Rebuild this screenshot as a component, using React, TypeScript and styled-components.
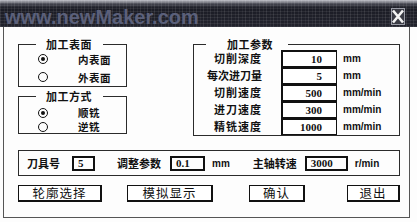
import styled, { createGlobalStyle } from 'styled-components';

const GlobalStyle = createGlobalStyle`
  html, body {
    margin: 0;
    padding: 0;
    background: #fdfdfd;
  }
  body {
    font-family: "Noto Sans CJK SC", "Liberation Sans", sans-serif;
    color: #111;
  }
`;

const Screen = styled.div`
  width: 417px;
  height: 222px;
  overflow: hidden;
  background: #fdfdfd;
`;

const TitleBar = styled.div`
  height: 27px;
  display: flex;
  align-items: center;
  justify-content: space-between;
  padding: 0 12px 0 5px;
  box-sizing: border-box;
  overflow: hidden;
  background:
    repeating-linear-gradient(90deg, rgba(255, 255, 255, 0.09) 0 1px, transparent 1px 4px, rgba(255, 255, 255, 0.05) 4px 5px, transparent 5px 7px),
    repeating-linear-gradient(0deg, rgba(255, 255, 255, 0.07) 0 1px, transparent 1px 3px),
    linear-gradient(180deg, #c4c5cc 0, #44454f 4px, #1b1c25 8px, #22232d 100%);
`;

const Watermark = styled.span`
  font-family: "Liberation Sans", sans-serif;
  font-weight: 700;
  font-size: 20px;
  line-height: 20px;
  margin-top: 6px;
  color: #5b607a;
  white-space: nowrap;
`;

const CloseBox = styled.span`
  display: flex;
  width: 14px;
  height: 17px;
  margin-top: 6px;
`;

const Body = styled.div`
  height: 191px;
  width: 407px;
  margin-left: 3px;
  box-sizing: border-box;
  border: 1px solid #555;
  border-top: none;
  padding: 11px 9px 0 14px;
`;

const TopSection = styled.div`
  display: flex;
  gap: 66px;
  align-items: flex-start;
`;

const LeftColumn = styled.div`
  width: 109px;
  display: flex;
  flex-direction: column;
  gap: 3px;
`;

const Group = styled.fieldset<{ $w: number }>`
  margin: 0;
  padding: 0;
  min-width: 0;
  width: ${(p) => p.$w}px;
  box-sizing: border-box;
  border: 1px solid #2b2b2b;
`;

const Legend = styled.legend<{ $ml: number; $pl: number; $pr: number }>`
  margin-left: ${(p) => p.$ml}px;
  padding: 0 ${(p) => p.$pr}px 0 ${(p) => p.$pl}px;
  font-size: 11px;
  line-height: 12px;
  font-weight: 700;
  letter-spacing: 0.5px;
`;

const RadioList = styled.div<{ $pt: number }>`
  display: flex;
  flex-direction: column;
  padding-top: ${(p) => p.$pt}px;
`;

const RadioRow = styled.div<{ $h: number }>`
  display: grid;
  grid-template-columns: 10px auto;
  column-gap: 30px;
  align-items: center;
  height: ${(p) => p.$h}px;
  padding-left: 19px;
`;

const RadioDot = styled.span<{ $on?: boolean }>`
  width: 10px;
  height: 10px;
  box-sizing: border-box;
  border-radius: 50%;
  border: 1.5px solid #111;
  display: flex;
  align-items: center;
  justify-content: center;
  &::after {
    content: '';
    width: 4px;
    height: 4px;
    border-radius: 50%;
    background: ${(p) => (p.$on ? '#111' : 'transparent')};
  }
`;

const RadioText = styled.span`
  font-size: 10.5px;
  font-weight: 700;
  letter-spacing: 0.5px;
  white-space: nowrap;
`;

const ParamTable = styled.div`
  display: flex;
  flex-direction: column;
`;

const ParamRow = styled.div`
  display: grid;
  grid-template-columns: 87px 56px auto;
  height: 17px;
  align-items: stretch;
`;

const ParamLabel = styled.span<{ $ls: number }>`
  text-align: right;
  padding-right: 19px;
  font-size: 11px;
  font-weight: 700;
  line-height: 17px;
  letter-spacing: ${(p) => p.$ls}px;
  white-space: nowrap;
`;

const ParamBox = styled.span`
  box-sizing: border-box;
  border-style: solid;
  border-color: #111;
  border-width: 2px 1px 1px 2px;
  background: #fff;
  text-align: right;
  padding-right: 14px;
  font-family: "Liberation Serif", serif;
  font-weight: 700;
  font-size: 11px;
  line-height: 14px;
`;

const Unit = styled.span<{ $ml?: number }>`
  margin-left: ${(p) => p.$ml ?? 6}px;
  font-family: "Liberation Sans", sans-serif;
  font-weight: 700;
  font-size: 10px;
  line-height: 17px;
  white-space: nowrap;
  flex-shrink: 0;
`;

const BottomGroup = styled.div`
  margin-top: 14px;
  width: 382px;
  height: 26px;
  box-sizing: border-box;
  border: 1px solid #2b2b2b;
  display: flex;
  align-items: center;
`;

const FieldLabel = styled.span<{ $ml: number }>`
  margin-left: ${(p) => p.$ml}px;
  font-size: 11px;
  font-weight: 700;
  white-space: nowrap;
  flex-shrink: 0;
`;

const FieldBox = styled.span<{ $ml: number; $w: number }>`
  margin-left: ${(p) => p.$ml}px;
  width: ${(p) => p.$w}px;
  height: 15px;
  box-sizing: border-box;
  flex-shrink: 0;
  border: 2px solid #111;
  box-shadow: inset 1px 1px 0 #fff;
  padding-left: 4px;
  font-family: "Liberation Serif", serif;
  font-weight: 700;
  font-size: 11px;
  line-height: 11px;
`;

const ButtonRow = styled.div`
  margin-top: 9px;
  display: flex;
`;

const PushButton = styled.button<{ $ml: number; $w: number }>`
  margin-left: ${(p) => p.$ml}px;
  width: ${(p) => p.$w}px;
  height: 17px;
  padding: 0;
  box-sizing: border-box;
  background: #fff;
  border: 1px solid #111;
  border-right-width: 2px;
  border-bottom-width: 2px;
  font-family: "Noto Sans CJK SC", sans-serif;
  font-size: 12.5px;
  line-height: 14px;
  letter-spacing: 1px;
  color: #111;
`;

const params = [
  { label: '切削深度', value: '10', unit: 'mm', ls: 1 },
  { label: '每次进刀量', value: '5', unit: 'mm', ls: 0 },
  { label: '切削速度', value: '500', unit: 'mm/min', ls: 1 },
  { label: '进刀速度', value: '300', unit: 'mm/min', ls: 1 },
  { label: '精铣速度', value: '1000', unit: 'mm/min', ls: 1 },
];

function CloseIcon() {
  return (
    <svg width="14" height="17" viewBox="0 0 14 17">
      <rect x="0.5" y="0.5" width="13" height="16" fill="#3a3b44" stroke="#9a9ca6" />
      <path d="M2 2.5 L12 14.5 M12 2.5 L2 14.5" stroke="#f4f4f4" strokeWidth="2.6" />
    </svg>
  );
}

export default function App() {
  return (
    <Screen>
      <GlobalStyle />
      <TitleBar>
        <Watermark>www.newMaker.com</Watermark>
        <CloseBox>
          <CloseIcon />
        </CloseBox>
      </TitleBar>
      <Body>
        <TopSection>
          <LeftColumn>
            <Group $w={109}>
              <Legend $ml={17} $pl={10} $pr={11}>加工表面</Legend>
              <RadioList $pt={0}>
                <RadioRow $h={18}>
                  <RadioDot $on />
                  <RadioText>内表面</RadioText>
                </RadioRow>
                <RadioRow $h={18}>
                  <RadioDot />
                  <RadioText>外表面</RadioText>
                </RadioRow>
              </RadioList>
            </Group>
            <Group $w={109}>
              <Legend $ml={17} $pl={10} $pr={11}>加工方式</Legend>
              <RadioList $pt={3}>
                <RadioRow $h={14}>
                  <RadioDot $on />
                  <RadioText>顺铣</RadioText>
                </RadioRow>
                <RadioRow $h={14}>
                  <RadioDot />
                  <RadioText>逆铣</RadioText>
                </RadioRow>
              </RadioList>
            </Group>
          </LeftColumn>
          <Group $w={207}>
            <Legend $ml={12} $pl={21} $pr={15}>加工参数</Legend>
            <ParamTable>
              {params.map((p) => (
                <ParamRow key={p.label}>
                  <ParamLabel $ls={p.ls}>{p.label}</ParamLabel>
                  <ParamBox>{p.value}</ParamBox>
                  <Unit>{p.unit}</Unit>
                </ParamRow>
              ))}
            </ParamTable>
          </Group>
        </TopSection>
        <BottomGroup>
          <FieldLabel $ml={8}>刀具号</FieldLabel>
          <FieldBox $ml={12} $w={23}>5</FieldBox>
          <FieldLabel $ml={22}>调整参数</FieldLabel>
          <FieldBox $ml={9} $w={35}>0.1</FieldBox>
          <Unit $ml={7}>mm</Unit>
          <FieldLabel $ml={23}>主轴转速</FieldLabel>
          <FieldBox $ml={8} $w={43}>3000</FieldBox>
          <Unit $ml={7}>r/min</Unit>
        </BottomGroup>
        <ButtonRow>
          <PushButton $ml={0} $w={84}>轮廓选择</PushButton>
          <PushButton $ml={25} $w={86}>模拟显示</PushButton>
          <PushButton $ml={36} $w={56}>确认</PushButton>
          <PushButton $ml={42} $w={53}>退出</PushButton>
        </ButtonRow>
      </Body>
    </Screen>
  );
}
